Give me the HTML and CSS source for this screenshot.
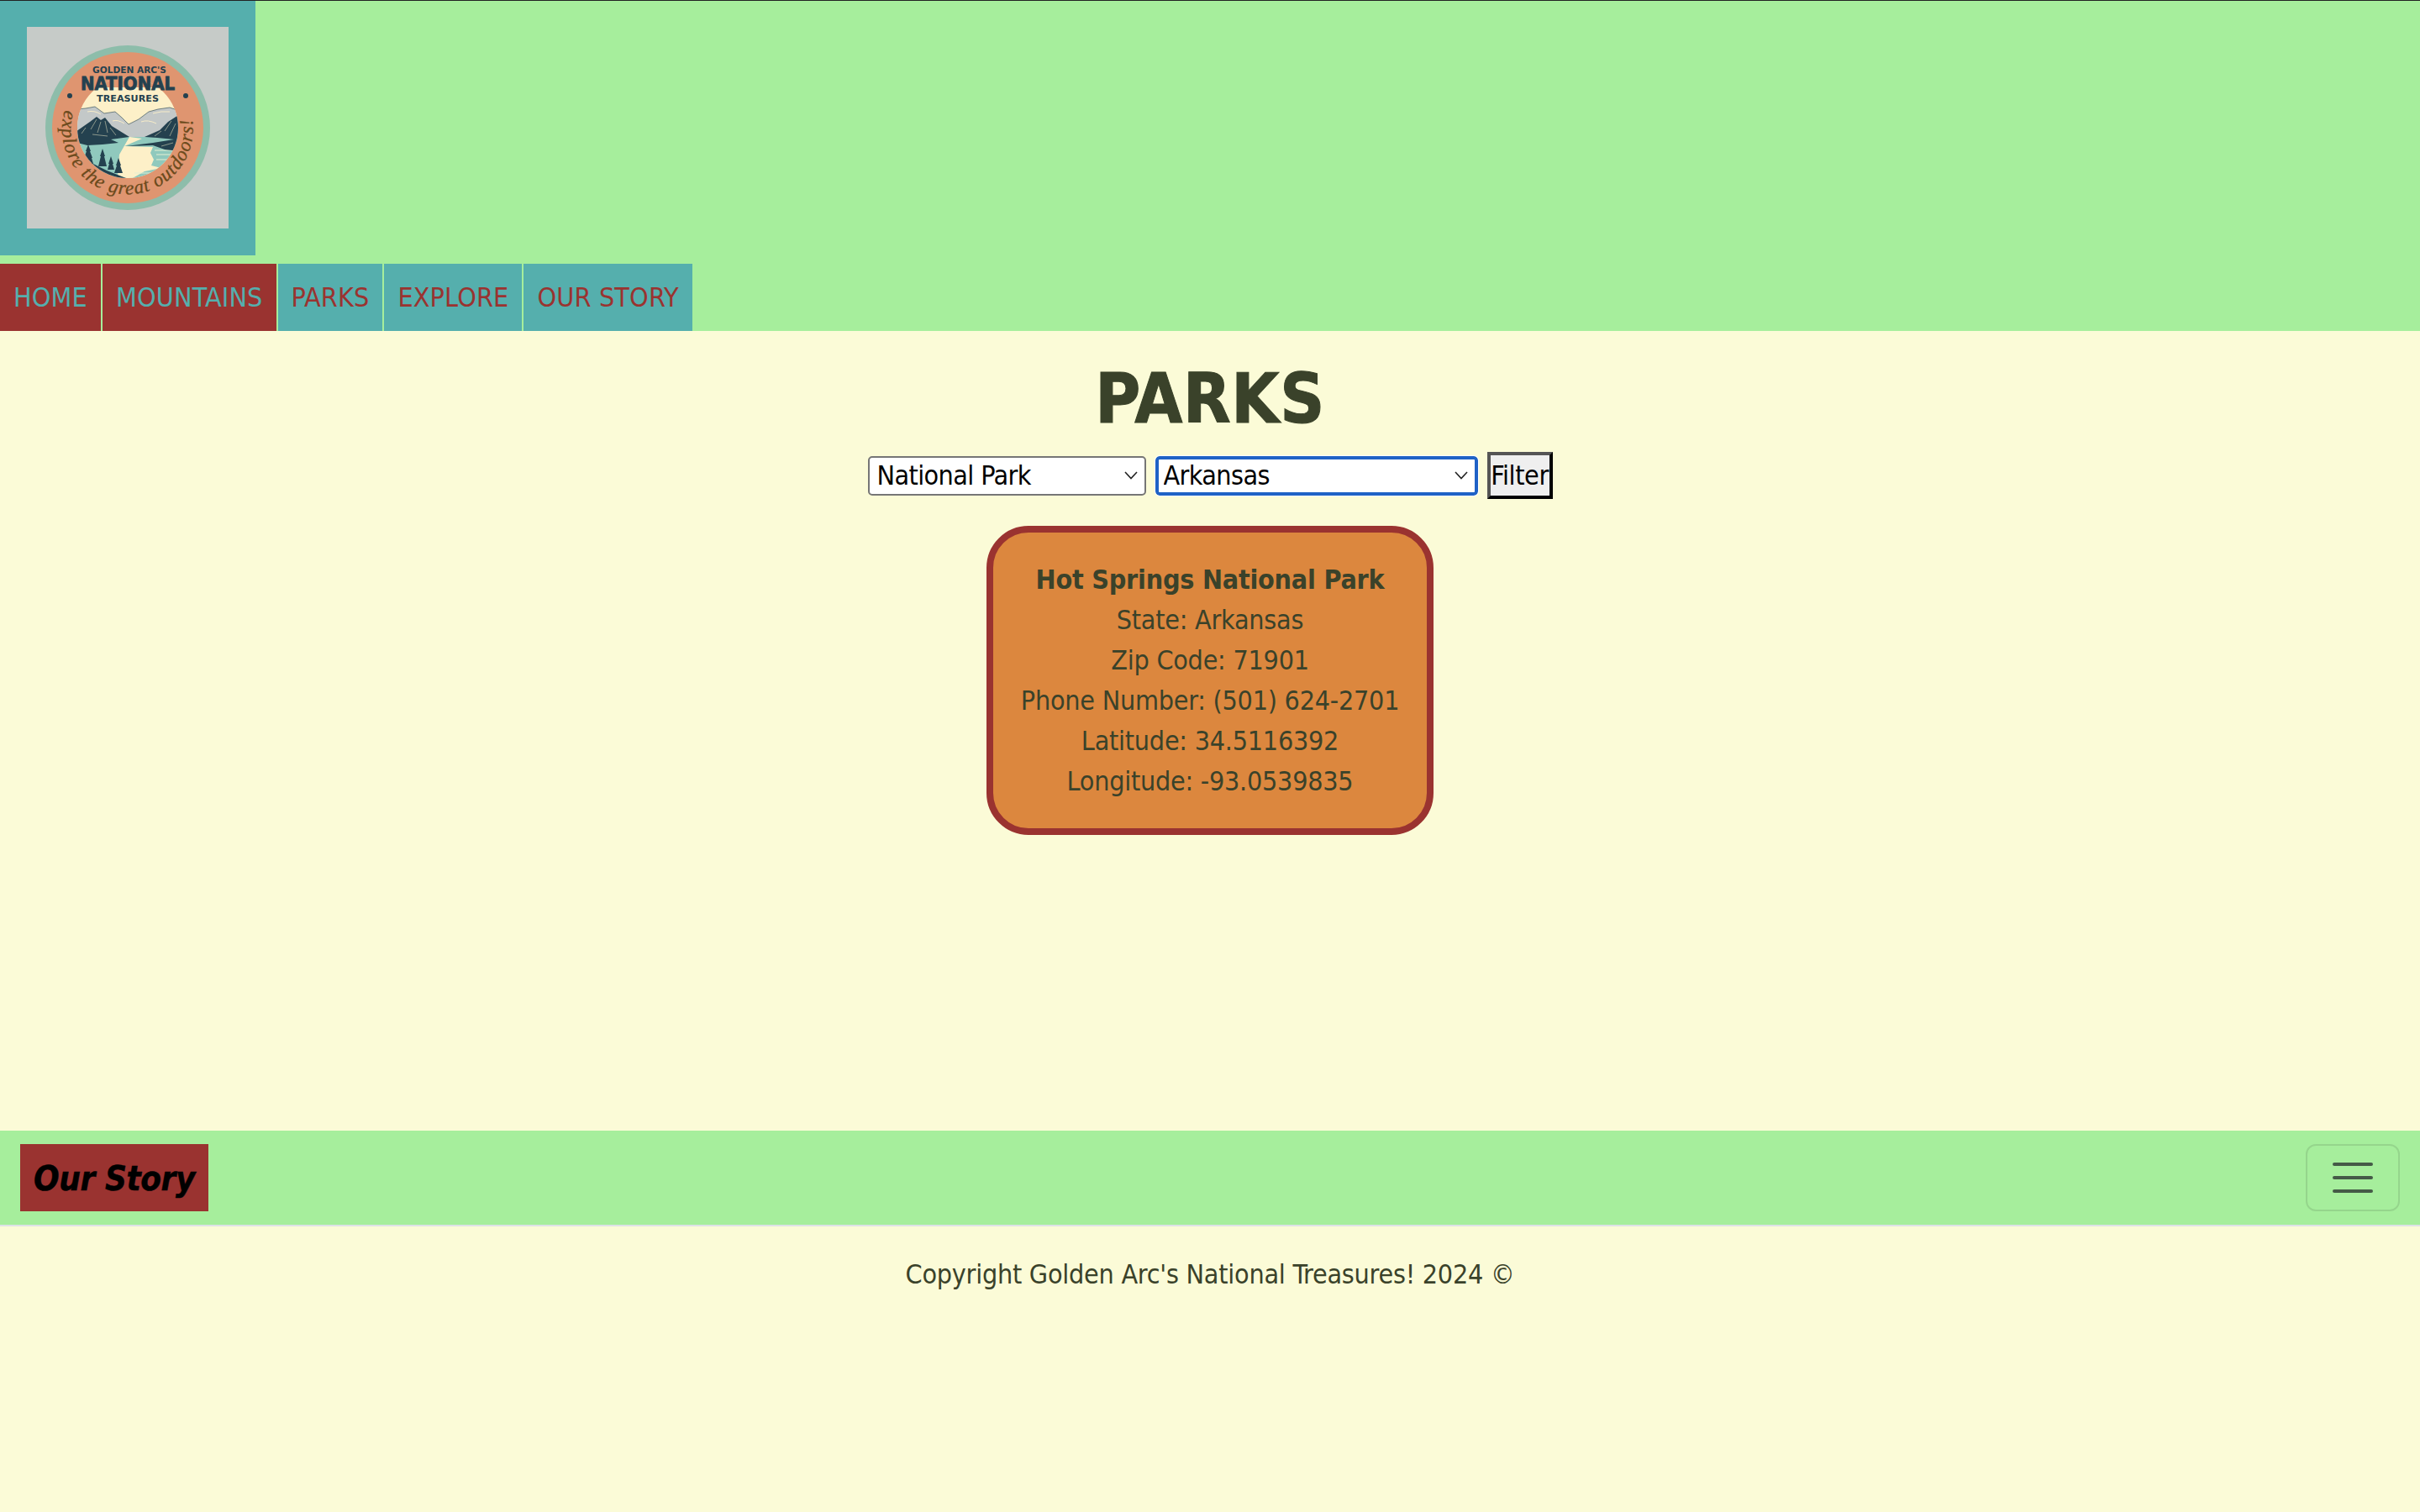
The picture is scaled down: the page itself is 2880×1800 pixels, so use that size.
FILE: index.html

```html
<!DOCTYPE html>
<html lang="en">
<head>
    <meta charset="UTF-8">
    <title>Parks</title>
    <link rel="stylesheet" href="styles.css">
</head>
<body>
    <header class="site-header">
        <div class="logo-box">
            <svg class="logo" viewBox="0 0 240 240" role="img" aria-label="Golden Arc's National Treasures">
                <defs>
                    <clipPath id="scene"><circle cx="120" cy="120" r="60"/></clipPath>
                    <path id="motto" d="M45 99 A78 78 0 1 0 196 105"/>
                </defs>
                <rect width="240" height="240" fill="#c6cbc8"/>
                <circle cx="120" cy="120" r="98" fill="#8dbdaa"/>
                <circle cx="120" cy="120" r="90" fill="#df9570"/>
                <g clip-path="url(#scene)">
                    <rect x="60" y="60" width="120" height="120" fill="#fdf0c8"/>
                    <rect x="60" y="60" width="120" height="12" fill="#df9570"/>
                    <!-- far range -->
                    <path fill="#c3c8c8" d="M60 98 L70 97 L81 95 L92 103 L105 101 L113 108 L121 116 L133 110 L145 101 L156 98 L170 96 L182 100 V135 H60Z"/>
                    <path fill="none" stroke="#24414f" stroke-width=".6" d="M60 98 L70 97 L81 95 L92 103 L105 101 L113 108 L121 116 M121 116 L133 110 L145 101 L156 98 L170 96 L182 100"/>
                    <path fill="none" stroke="#fdf0c8" stroke-width=".9" d="M102 112 Q108 110 116 115 M136 113 Q144 110 154 115 M72 101 Q80 99 88 104 M150 103 Q160 100 170 101"/>
                    <!-- lake -->
                    <rect x="60" y="131" width="120" height="50" fill="#90c9bd"/>
                    <path fill="#fdf0c8" d="M122 131 L137 133 L116 142 L150 143 L147 150 L151 158 L148 165 L160 168 L140 172 L124 181 L108 178 L110 152 Z"/>
                    <path fill="none" stroke="#e4efd2" stroke-width="1" d="M152 147 H176 M154 152 H174 M154 158 H170 M128 174 H150"/>
                    <!-- left mountain -->
                    <path fill="#24414f" d="M58 125 L75 113 L83 107 L88 111 L93 108 L101 118 L122 131 L100 134 L109 138 L90 140 L72 141 L60 138Z"/>
                    <path fill="none" stroke="#b9bda6" stroke-width=".7" d="M83 110 L76 122 M88 113 L84 126 M93 112 L96 126 M70 120 L65 127 M99 120 L106 129 M78 128 L96 130"/>
                    <!-- right mountain -->
                    <path fill="#24414f" d="M182 104 L168 113 L158 123 L140 131 L155 132 L175 134 L150 138 L118 142 L150 141 L164 146 L182 148Z"/>
                    <path fill="none" stroke="#b9bda6" stroke-width=".7" d="M172 112 L164 124 M177 115 L170 130 M160 124 L152 130 M174 138 L160 142"/>
                    <!-- near bank and trees -->
                    <path fill="#24414f" d="M60 140 L75 161 L95 171 L123 182 L60 186Z"/>
                    <path fill="#24414f" d="M73 140 L76 148 L75 148 L78 156 L77 156 L79 163 L67 163 L69 156 L68 156 L71 148 L70 148Z"/>
                    <path fill="#24414f" d="M90 145 L93 154 L92 154 L95 166 L85 166 L88 154 L87 154Z"/>
                    <path fill="#24414f" d="M100 154 L103 163 L102 163 L104 170 L96 170 L98 163 L97 163Z"/>
                    <path fill="#24414f" d="M109 156 L112 165 L111 165 L114 174 L104 174 L107 165 L106 165Z"/>
                </g>
                <circle cx="51" cy="82" r="3" fill="#24414f"/>
                <circle cx="189" cy="82" r="3" fill="#24414f"/>
                <text class="logo-small" x="122" y="55" text-anchor="middle" textLength="88" lengthAdjust="spacingAndGlyphs">GOLDEN ARC'S</text>
                <text class="logo-big" x="120" y="75" text-anchor="middle" textLength="112" lengthAdjust="spacingAndGlyphs">NATIONAL</text>
                <text class="logo-small" x="120" y="89" text-anchor="middle" textLength="74" lengthAdjust="spacingAndGlyphs">TREASURES</text>
                <text class="logo-motto"><textPath href="#motto" textLength="279" lengthAdjust="spacing">explore the great outdoors!</textPath></text>
            </svg>
        </div>
        <nav class="top-nav">
            <a class="nav-link nav-red" href="#">HOME</a>
            <a class="nav-link nav-red" href="#">MOUNTAINS</a>
            <a class="nav-link nav-teal" href="#">PARKS</a>
            <a class="nav-link nav-teal" href="#">EXPLORE</a>
            <a class="nav-link nav-teal" href="#">OUR STORY</a>
        </nav>
    </header>

    <main class="content">
        <h1>PARKS</h1>
        <form class="filters">
            <select class="type-select">
                <option>National Park</option>
            </select>
            <select class="state-select">
                <option>Arkansas</option>
            </select>
            <button type="button" class="filter-btn">Filter</button>
        </form>
        <div class="park-card">
            <div class="park-name">Hot Springs National Park</div>
            <div>State: Arkansas</div>
            <div>Zip Code: 71901</div>
            <div>Phone Number: (501) 624-2701</div>
            <div>Latitude: 34.5116392</div>
            <div>Longitude: -93.0539835</div>
        </div>
    </main>

    <nav class="bottom-nav">
        <a class="brand" href="#">Our Story</a>
        <button type="button" class="toggler" aria-label="Toggle navigation">
            <span class="toggler-bar"></span>
            <span class="toggler-bar"></span>
            <span class="toggler-bar"></span>
        </button>
    </nav>
    <p class="copyright">Copyright Golden Arc's National Treasures! 2024 ©</p>
</body>
</html>
```

FILE: styles.css

```css
body {
    margin: 0;
    min-height: 1800px;
    background-color: #fbfbd7;
    color: #3a422a;
    font-family: "DejaVu Sans", Tahoma, sans-serif;
    font-stretch: condensed;
    font-size: 32px;
    line-height: 48px;
    letter-spacing: -0.25px;
}

.site-header {
    background-color: #a6ee9c;
    border-top: 1px solid #222;
}

.logo-box {
    width: 240px;
    height: 240px;
    padding: 31px 32px 32px;
    background-color: #55afad;
}

.logo {
    display: block;
    width: 240px;
    height: 240px;
}

.logo-small {
    font-family: "DejaVu Sans", sans-serif;
    font-weight: bold;
    font-size: 11px;
    letter-spacing: 0;
    fill: #24414f;
}

.logo-big {
    font-family: "DejaVu Sans", sans-serif;
    font-weight: bold;
    font-size: 22px;
    letter-spacing: 0;
    fill: #24414f;
    stroke: #24414f;
    stroke-width: .8px;
}

.logo-motto {
    font-family: "Liberation Serif", serif;
    font-style: italic;
    font-size: 23px;
    letter-spacing: 0;
    fill: #6b4a1c;
    stroke: #6b4a1c;
    stroke-width: .3px;
}

.top-nav {
    display: flex;
    gap: 2px;
    margin-top: 10px;
}

.nav-link {
    display: block;
    padding: 16px;
    text-decoration: none;
    letter-spacing: 0.15px;
}

.nav-red {
    background-color: #9a3330;
    color: #55afad;
}

.nav-teal {
    background-color: #55afad;
    color: #9a3330;
}

.content {
    height: 952px;
    text-align: center;
    overflow: hidden;
}

h1 {
    margin: 33px 0 0;
    font-size: 82px;
    line-height: 96px;
    font-weight: bold;
    letter-spacing: 0.6px;
    -webkit-text-stroke: 1px #3a422a;
}

.filters {
    display: flex;
    justify-content: center;
    align-items: center;
    gap: 11px;
    margin-top: 15px;
}

select {
    appearance: none;
    height: 47px;
    padding: 0 4px 0 9px;
    font-family: inherit;
    font-stretch: condensed;
    font-size: 32px;
    letter-spacing: -0.6px;
    color: #000;
    background-color: #fff;
    background-image: url("data:image/svg+xml,%3Csvg xmlns='http://www.w3.org/2000/svg' width='16' height='10'%3E%3Cpath d='M1 1l7 7.5L15 1' fill='none' stroke='%23222' stroke-width='1.6'/%3E%3C/svg%3E");
    background-repeat: no-repeat;
    background-position: right 8px center;
    border: 2px solid #767676;
    border-radius: 5px;
}

.type-select {
    width: 331px;
}

.state-select {
    width: 384px;
    padding-left: 6px;
    border: 4px solid #1f62c6;
    outline: 1px solid #fff;
}

.filter-btn {
    width: 78px;
    height: 56px;
    padding: 0;
    font-family: inherit;
    font-stretch: condensed;
    font-size: 32px;
    letter-spacing: -0.4px;
    color: #000;
    background-color: #efefef;
    border: 4px solid #000;
    border-top-color: #555;
    border-left-color: #555;
    white-space: nowrap;
}

.park-card {
    width: 452px;
    margin: 32px auto 0;
    padding: 32px;
    background-color: #dc873e;
    border: 8px solid #9a3330;
    border-radius: 50px;
}

.park-name {
    font-weight: bold;
}

.bottom-nav {
    display: flex;
    justify-content: space-between;
    align-items: center;
    height: 80px;
    padding: 16px 24px;
    background-color: #a6ee9c;
    border-bottom: 2px solid #dee2e6;
}

.brand {
    display: block;
    width: 196px;
    padding: 17px 14px 15px;
    background-color: #9a3330;
    color: #000;
    font-size: 40px;
    font-weight: bold;
    font-style: italic;
    letter-spacing: -0.4px;
    text-decoration: none;
    text-align: center;
    -webkit-text-stroke: 0.5px #000;
}

.toggler {
    display: flex;
    flex-direction: column;
    justify-content: center;
    align-items: center;
    gap: 12px;
    width: 112px;
    height: 80px;
    padding: 0;
    background: transparent;
    border: 2px solid rgba(0, 0, 0, 0.1);
    border-radius: 12px;
}

.toggler-bar {
    display: block;
    width: 48px;
    height: 4px;
    border-radius: 2px;
    background-color: #455a47;
}

.copyright {
    margin: 33px 0 0;
    text-align: center;
}
```
